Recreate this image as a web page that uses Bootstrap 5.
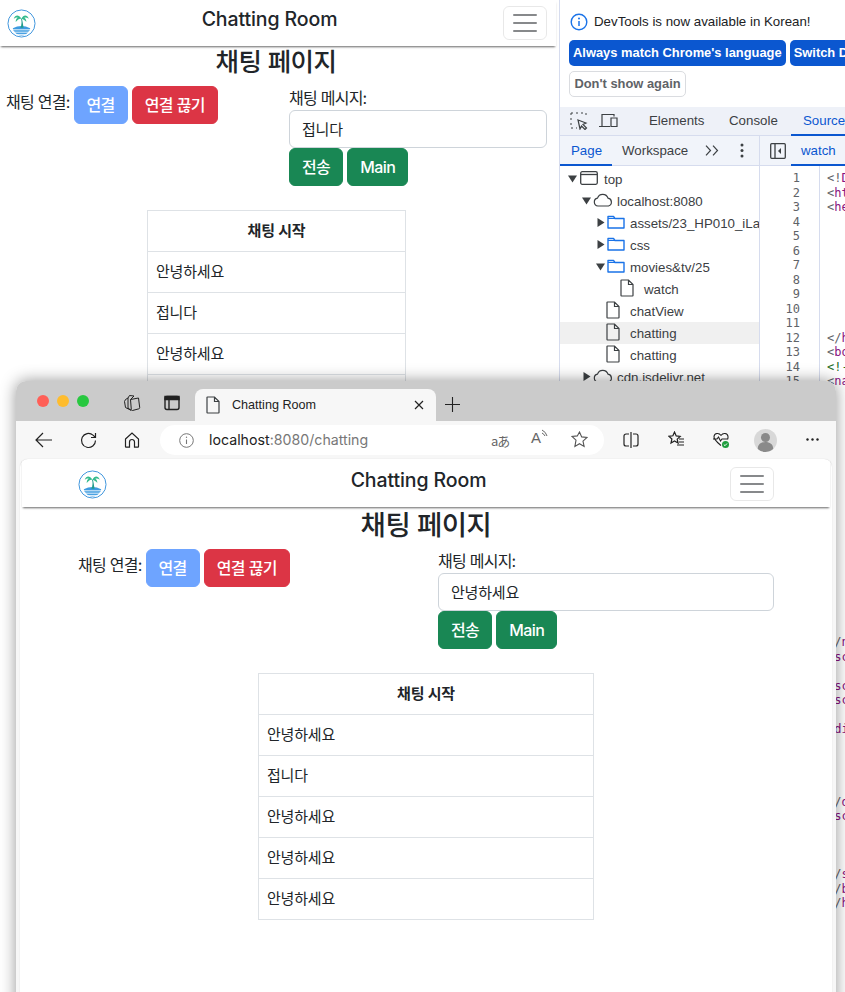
<!DOCTYPE html>
<html lang="ko">
<head>
<meta charset="utf-8">
<title>Chatting Room</title>
<link href="https://cdn.jsdelivr.net/npm/bootstrap@5.3.0/dist/css/bootstrap.min.css" rel="stylesheet">
<style>
html,body{height:992px;overflow:hidden}
body{position:relative;background:#fff;font-family:Inter,"Noto Sans CJK KR",sans-serif;color:#212529;width:845px}
.kr{letter-spacing:-.75px}
.desk-win{position:absolute;overflow:hidden;background:#fff}
.win-app{left:0;top:0;width:559px;height:381px}
.win-dev{left:559px;top:0;width:286px;height:992px;border-left:1px solid #d6dcee;font-family:"Liberation Sans",sans-serif;font-size:13.3px;color:#3c4043}
.win-edge{left:16px;top:381px;width:820px;height:640px;border-radius:10px 10px 0 0;box-shadow:0 0 16px rgba(0,0,0,.42);background:#f7f7f7}
.bar-nav{padding:6px 0;background:#fff;box-shadow:0 2px 2px -1px rgba(0,0,0,.6);height:46px;width:556px;position:relative;flex-wrap:nowrap}
.bar-big{padding:8px 0 6px;height:48px;margin:0 2px;width:auto;background:transparent}
.bar-title{font-size:19.5px;font-weight:500;line-height:24px;padding-bottom:8px;letter-spacing:-.1px}
.bar-nav .navbar-toggler{padding:1px 6px;font-size:20px;border-radius:6px;line-height:1;width:44px;height:34px;display:flex;align-items:center;justify-content:center;border-color:rgba(0,0,0,.09)}
.bar-nav .navbar-toggler-icon{opacity:.72}
.app-logo{width:29px;height:29px;display:block}
.head-ttl{font-size:27.5px;font-weight:500;line-height:33.6px;margin:2px 0 6px;text-align:center;letter-spacing:-.5px}
.app-sm .bar-pad{padding:0 9px 0 7px}
.app-sm .head-ttl{margin:-1px 7px 7px 0;font-size:25.5px}
.conn-lbl{padding-top:4px}
.msg-col{width:258px;margin-right:12px}
.conn-col{padding-left:6px}
.chat-tbl{width:259px;margin:24px 0 0 147px}
.chat-tbl th,.chat-tbl2 th{text-align:center;font-weight:700;letter-spacing:-.2px}
.chat-tbl td,.chat-tbl th,.chat-tbl2 td,.chat-tbl2 th{padding:8px;line-height:24px;font-size:15px}
.chat-tbl td,.chat-tbl2 td{letter-spacing:-.2px}
.btn{font-family:Inter,"Noto Sans CJK KR",sans-serif;font-weight:500;letter-spacing:-.6px}
.btn-on{background:#6ea4ff;border-color:#6ea4ff;color:#fff}
.form-control{color:#212529;font-size:15px;height:38px;padding-left:12px;border-color:#ced4da}
.form-control.kr{letter-spacing:-.2px}
.info-strip{height:107px;padding:12px 9px 0;background:#fff}
.info-line{height:19px;display:flex;align-items:center;gap:6px;margin-left:1px;color:#202124;white-space:nowrap}
.dt-btn{height:26px;border-radius:5px;font-size:12.9px;font-weight:700;padding:0 4px;display:flex;align-items:center;white-space:nowrap;flex:none}
.dt-fill{background:#0b57d0;color:#fff}
.dt-plain{border:1px solid #dadce0;color:#5f6368;width:117px;justify-content:center;margin-top:5px}
.dt-acts{margin-top:9px;gap:4px}
.tab-bar{height:29px;background:#eef1f8;border-bottom:1px solid #d6dcee;white-space:nowrap;position:relative}
.tab-bar .dt-t{position:absolute;top:4px;color:#3c4043}
.sub-bar{height:30px;background:#f1f4fa;border-bottom:1px solid #d6dcee;position:relative;white-space:nowrap}
.sub-bar .dt-t{position:absolute;top:5px}
.dt-on{color:#0b57d0!important}
.u-line{position:absolute;height:2px;background:#0b57d0;bottom:-1px}
.ic-abs{position:absolute;display:block}
.i-inspect{left:10px;top:5px}.i-device{left:39px;top:5px}
.x-elem{left:89px}.x-cons{left:169px}.x-srcs{left:243px}.x-line{left:231px;right:0}
.x-page{left:11px}.x-pline{left:0;width:52px}.x-work{left:62px}
.i-more{left:145px;top:9px}.i-dots{left:180px;top:7px}.i-panel{left:210px;top:7px}
.x-sep{position:absolute;left:199px;top:0;bottom:0;border-left:1px solid #d6dcee}
.x-watch{left:241px}
.split{display:flex;height:827px}
.tree{width:200px;border-right:1px solid #d6dcee;padding-top:2px;overflow:hidden;flex:none}
.t-row{height:22px;display:flex;align-items:center;white-space:nowrap;overflow:hidden;gap:2px}
.t-row svg{flex:none;margin-top:-2px}
.t-row>span{padding-top:2px}
.t-sel{background:#f0f0f0}
.t-tri{width:9px;display:block}
.m-win{margin:0 4px 0 1px}.m-fold{margin-right:3px}.m-cloud{margin-right:2px}.m-doc{margin-right:8px}
.in0{padding-left:8px}.in1{padding-left:22px}.in2{padding-left:36px}.in3{padding-left:60px}.in4{padding-left:46px}
.gutter{width:60px;border-right:1px solid #d6dcee;flex:none}
pre.code-pane{margin:0;font-family:"DejaVu Sans Mono","Liberation Mono",monospace;font-size:12px;letter-spacing:-.02px;line-height:14.5px;padding-top:5px;overflow:hidden;color:#881280}
pre.nums{text-align:right;padding-right:19px;color:#5f6368;width:59px}
pre.src{padding-left:7px}
.g{color:#5f6368}.c{color:#236e25}
.tabstrip{height:40px;background:#cbcbcb;display:flex;align-items:flex-end;position:relative}
.lights{display:flex;gap:8px;position:absolute;left:21px;top:14px}
.lights i{width:12px;height:12px;border-radius:50%;display:block}
.l-r{background:#ff5f57}.l-y{background:#febc2e}.l-g{background:#28c840}
.brow-tab{margin-left:179px;width:241px;height:32px;background:#f7f7f7;border-radius:8px 8px 0 0;display:flex;align-items:center;font-family:"Liberation Sans",sans-serif;font-size:12.6px;padding:0 12px 0 11px;gap:12px;color:#222}
.i-coll{left:107px;top:13px}.i-tabs{left:147px;top:13px}.i-plus{left:429px;top:16px}
.toolbar{height:38px;background:#f7f7f7;display:flex;align-items:center;position:relative}
.addr{position:absolute;left:144px;width:444px;height:30px;top:4px;border-radius:15px;background:#fff;display:flex;align-items:center;font-family:Inter,sans-serif;font-size:14.2px;padding-left:19px;gap:15px;color:#222}
.addr em{font-style:normal;color:#777}
.i-back{left:19px;top:11px}.i-ref{left:64px;top:11px}.i-home{left:108px;top:11px}
.t-aa{position:absolute;left:475px;top:10px;font:13px "Noto Sans CJK JP",sans-serif;color:#666;letter-spacing:-1px}
.t-ra{position:absolute;left:515px;top:8px;font:15px "Liberation Sans",sans-serif;color:#666}
.i-star{left:555px;top:10px}.i-split{left:607px;top:11px}.i-fav{left:652px;top:10px}.i-heart{left:696px;top:10px}.i-user{left:738px;top:8px}.i-menu{left:790px;top:17px}
.view-pg{margin:0 4px;background:#fff;border-radius:8px 8px 0 0;height:560px;box-shadow:0 0 1px rgba(0,0,0,.2);position:relative}
.chat-tbl2{width:336px;margin:24px 0 0}
</style>
</head>
<body>
<svg width="0" height="0" class="position-absolute">
  <symbol id="logo" viewBox="0 0 30 30">
    <circle cx="15" cy="15" r="14" fill="#fff" stroke="#3b93dc" stroke-width="1"/>
    <path d="M6 20q9-5 18 0l-.6 2q-3.500 5.500-8.400 5.500T6.600 22z" fill="#3d9be0"/>
    <path d="M4.500 21.500h21M6 24h18M9 26.300h12" stroke="#fff" stroke-width=".9"/>
    <path d="M14.500 10q1.500 5-.8 9.500h3.400q-.6-5-1.600-9.500z" fill="#1f9c8c"/>
    <path d="M15 10C12 5.500 8.500 6 7 10c2-1.500 3.500-1.500 4-1-1.500 1-2 2.500-2 4.500C11 10.500 13 10 15 10c2 .5 3.500 1.500 5 3.500 0-2-.6-3.400-2-4.500 1-.5 3-.2 4.500 1-1.500-4-5.500-4.500-7.500 0z" fill="#35bb8e"/>
  </symbol>
  <symbol id="folder" viewBox="0 0 18 16"><path d="M1 14V2.500h5.500L8 4.500h9V14z" fill="none" stroke="#1a73e8" stroke-width="1.400" stroke-linejoin="round"/><path d="M1 4.500h7" stroke="#1a73e8"/></symbol>
  <symbol id="doc" viewBox="0 0 14 18"><path d="M1.500 1h7L13 5.500V16.500a.5.5 0 0 1-.5.5h-11a.5.5 0 0 1-.5-.5V1.500A.5.5 0 0 1 1.500 1zM8.500 1v4.500H13" fill="none" stroke="#3c4043" stroke-width="1.200"/></symbol>
  <symbol id="cloud" viewBox="0 0 20 14"><path d="M5 13a4 4 0 0 1-.5-7.900A5.500 5.500 0 0 1 15 5.200 4 4 0 0 1 15.500 13z" fill="none" stroke="#3c4043" stroke-width="1.200"/></symbol>
  <symbol id="tridn" viewBox="0 0 9 9"><path d="M0 1.500h9L4.500 8.500z" fill="#3c4043"/></symbol>
  <symbol id="trirt" viewBox="0 0 9 9"><path d="M1.500 0v9l7-4.500z" fill="#3c4043"/></symbol>
</svg>

<section class="desk-win win-app app-sm">
  <nav class="navbar bar-nav">
    <div class="d-flex justify-content-between align-items-center w-100 bar-pad">
      <a href="#"><svg class="app-logo"><use href="#logo"/></svg></a>
      <span class="bar-title">Chatting Room</span>
      <button class="navbar-toggler" type="button" aria-label="menu"><span class="navbar-toggler-icon"></span></button>
    </div>
  </nav>
  <h1 class="head-ttl kr">채팅 페이지</h1>
  <div class="d-flex justify-content-between">
    <div class="d-flex align-items-start gap-1 conn-col">
      <span class="conn-lbl kr">채팅 연결:</span>
      <button class="btn btn-on" type="button">연결</button>
      <button class="btn btn-danger" type="button">연결 끊기</button>
    </div>
    <div class="msg-col">
      <label class="form-label mb-0 d-block kr">채팅 메시지:</label>
      <input class="form-control kr" value="접니다">
      <div class="d-flex gap-1"><button class="btn btn-success" type="button">전송</button><button class="btn btn-success" type="button">Main</button></div>
    </div>
  </div>
  <table class="table table-bordered chat-tbl kr">
    <thead><tr><th>채팅 시작</th></tr></thead>
    <tbody><tr><td>안녕하세요</td></tr><tr><td>접니다</td></tr><tr><td>안녕하세요</td></tr><tr><td>안녕하세요</td></tr></tbody>
  </table>
</section>

<aside class="desk-win win-dev">
  <div class="info-strip">
    <div class="info-line">
      <svg width="18" height="18" viewBox="0 0 18 18"><circle cx="9" cy="9" r="7.800" fill="none" stroke="#1a73e8" stroke-width="1.400"/><path d="M9 8v5" stroke="#1a73e8" stroke-width="1.500"/><circle cx="9" cy="5.500" r="1" fill="#1a73e8"/></svg>
      <span>DevTools is now available in Korean!</span>
    </div>
    <div class="d-flex dt-acts"><span class="dt-btn dt-fill">Always match Chrome's language</span><span class="dt-btn dt-fill">Switch DevTools to Korean</span></div>
    <span class="dt-btn dt-plain">Don't show again</span>
  </div>
  <div class="tab-bar">
    <svg class="ic-abs i-inspect" width="18" height="18" viewBox="0 0 18 18"><path d="M1 3V1h2M6 1h2M11 1h2M16 1v2M1 6v2M1 11v2M1 16h2M6 16h1" stroke="#3c4043" fill="none"/><path d="M8 8l8 3-3 1.500 3.500 3.500-1.500 1.500-3.500-3.500L10 17z" fill="none" stroke="#3c4043" stroke-width="1.200"/></svg>
    <svg class="ic-abs i-device" width="19" height="18" viewBox="0 0 19 18"><path d="M0 14.500h11M3 14V2.500h12v2M12 6h6v8.500h-6z" stroke="#3c4043" fill="none" stroke-width="1.200"/></svg>
    <span class="dt-t x-elem">Elements</span>
    <span class="dt-t x-cons">Console</span>
    <span class="dt-t dt-on x-srcs">Sources</span>
    <span class="u-line x-line"></span>
  </div>
  <div class="sub-bar">
    <span class="dt-t dt-on x-page">Page</span><span class="u-line x-pline"></span>
    <span class="dt-t x-work">Workspace</span>
    <svg class="ic-abs i-more" width="14" height="11" viewBox="0 0 14 11" fill="none" stroke="#3c4043" stroke-width="1.200"><path d="M1 .7l4.500 4.800L1 10.300M8 .7l4.500 4.800L8 10.300"/></svg>
    <svg class="ic-abs i-dots" width="4" height="15" viewBox="0 0 4 15"><circle cx="2" cy="2" r="1.500" fill="#3c4043"/><circle cx="2" cy="7.500" r="1.500" fill="#3c4043"/><circle cx="2" cy="13" r="1.500" fill="#3c4043"/></svg>
    <svg class="ic-abs i-panel" width="16" height="16" viewBox="0 0 16 16"><rect x=".7" y=".7" width="14.600" height="14.600" rx="1" fill="none" stroke="#3c4043" stroke-width="1.300"/><path d="M5 1v14" stroke="#3c4043" stroke-width="1.300"/><path d="M11 5v6L8 8z" fill="#3c4043"/></svg>
    <span class="x-sep"></span>
    <span class="dt-t dt-on x-watch">watch</span><span class="u-line x-line"></span>
  </div>
  <div class="split">
    <div class="tree">
      <div class="t-row in0"><svg class="t-tri" height="9"><use href="#tridn"/></svg><svg width="18" height="14" viewBox="0 0 18 14" class="m-win"><rect x=".7" y=".7" width="16.600" height="12.600" rx="1.500" fill="none" stroke="#3c4043" stroke-width="1.300"/><path d="M1 3.500h16" stroke="#3c4043" stroke-width="1.300"/></svg><span>top</span></div>
      <div class="t-row in1"><svg class="t-tri" height="9"><use href="#tridn"/></svg><svg width="20" height="14" class="m-cloud"><use href="#cloud"/></svg><span>localhost:8080</span></div>
      <div class="t-row in2"><svg class="t-tri" height="9"><use href="#trirt"/></svg><svg width="18" height="16" class="m-fold"><use href="#folder"/></svg><span>assets/23_HP010_iLa</span></div>
      <div class="t-row in2"><svg class="t-tri" height="9"><use href="#trirt"/></svg><svg width="18" height="16" class="m-fold"><use href="#folder"/></svg><span>css</span></div>
      <div class="t-row in2"><svg class="t-tri" height="9"><use href="#tridn"/></svg><svg width="18" height="16" class="m-fold"><use href="#folder"/></svg><span>movies&amp;tv/25</span></div>
      <div class="t-row in3"><svg width="14" height="18" class="m-doc"><use href="#doc"/></svg><span>watch</span></div>
      <div class="t-row in4"><svg width="14" height="18" class="m-doc"><use href="#doc"/></svg><span>chatView</span></div>
      <div class="t-row in4 t-sel"><svg width="14" height="18" class="m-doc"><use href="#doc"/></svg><span>chatting</span></div>
      <div class="t-row in4"><svg width="14" height="18" class="m-doc"><use href="#doc"/></svg><span>chatting</span></div>
      <div class="t-row in1"><svg class="t-tri" height="9"><use href="#trirt"/></svg><svg width="20" height="14" class="m-cloud"><use href="#cloud"/></svg><span>cdn.jsdelivr.net</span></div>
    </div>
    <div class="gutter"><pre class="code-pane nums">1
2
3
4
5
6
7
8
9
10
11
12
13
14
15</pre></div>
    <pre class="code-pane src"><span class="g">&lt;!</span>DOCTYPE
<span class="g">&lt;</span>html
<span class="g">&lt;</span>head








<span class="g">&lt;/</span>head
<span class="g">&lt;</span>body
<span class="c">&lt;!-- nav</span>
<span class="g">&lt;</span>nav

















<span class="g">&lt;/</span>nav
<span class="g">&lt;</span>script

<span class="g">&lt;</span>script
<span class="g">&lt;</span>script

<span class="g">&lt;</span>div




<span class="g">&lt;/</span>div
<span class="g">&lt;</span>script



<span class="g">&lt;/</span>script
<span class="g">&lt;/</span>body
<span class="g">&lt;/</span>html</pre>
  </div>
</aside>

<main class="desk-win win-edge">
  <div class="tabstrip">
    <div class="lights"><i class="l-r"></i><i class="l-y"></i><i class="l-g"></i></div>
    <svg class="ic-abs i-coll" width="18" height="18" viewBox="0 0 18 18" fill="none" stroke="#222" stroke-linejoin="round"><path d="M7.500 5.500l8-1.500 1.200 9.500q.1 1-.8 1.300L9.500 16.500q-1 .2-1.200-.8z"/><path d="M7.500 5.500L11 2 6.500 1.500 5 4v10l3 2.200M5 4L2.500 5.500 1.500 7.500l1 6L8 16.300"/></svg>
    <svg class="ic-abs i-tabs" width="18" height="18" viewBox="0 0 18 18" fill="none" stroke="#222" stroke-width="1.400"><rect x="2" y="2.500" width="14" height="13" rx="2"/><path d="M2 5.500h14v-3H2z" fill="#222"/><path d="M6 6v9.500"/></svg>
    <div class="brow-tab">
      <svg width="14" height="18"><use href="#doc"/></svg>
      <span class="flex-grow-1">Chatting Room</span>
      <svg width="10" height="10" viewBox="0 0 10 10"><path d="M1 1l8 8M9 1l-8 8" stroke="#222" stroke-width="1.200"/></svg>
    </div>
    <svg class="ic-abs i-plus" width="15" height="15" viewBox="0 0 15 15"><path d="M7.500 0v15M0 7.500h15" stroke="#222" stroke-width="1.100"/></svg>
  </div>
  <div class="toolbar">
    <svg class="ic-abs i-back" width="17" height="16" viewBox="0 0 17 16" fill="none" stroke="#222" stroke-width="1.200"><path d="M17 8H1M8 1L1 8l7 7"/></svg>
    <svg class="ic-abs i-ref" width="17" height="17" viewBox="0 0 17 17" fill="none" stroke="#222" stroke-width="1.200"><path d="M15.500 8.500a7 7 0 1 1-2.500-5.400l2.500 2.400M15.500 1v4.500H11"/></svg>
    <svg class="ic-abs i-home" width="16" height="16" viewBox="0 0 16 16" fill="none" stroke="#222" stroke-width="1.200"><path d="M1.500 7L8 1l6.500 6v7.500a.7.7 0 0 1-.7.700H10.500V10a2.500 2.500 0 0 0-5 0v5.200H2.200a.7.7 0 0 1-.7-.7z"/></svg>
    <div class="addr">
      <svg width="15" height="15" viewBox="0 0 15 15"><circle cx="7.500" cy="7.500" r="6.800" fill="none" stroke="#777"/><path d="M7.500 6.500V11" stroke="#777" stroke-width="1.100"/><circle cx="7.500" cy="4.300" r=".7" fill="#777"/></svg>
      <span>localhost<em>:8080/chatting</em></span>
    </div>
    <span class="t-aa">aあ</span>
    <span class="t-ra">A<svg width="8" height="12" viewBox="0 0 8 12" fill="none" stroke="#666" class="align-top"><path d="M1 1q4 2 5 6M1 4q2 1 3 3"/></svg></span>
    <svg class="ic-abs i-star" width="17" height="17" viewBox="0 0 17 17" fill="none" stroke="#555" stroke-width="1.100"><path d="M8.500 1l2.200 4.900 5.300.6-4 3.600 1.100 5.300-4.600-2.700-4.600 2.700L5 9.100l-4-3.600 5.300-.6z"/></svg>
    <svg class="ic-abs i-split" width="16" height="16" viewBox="0 0 16 16" fill="none" stroke="#222" stroke-width="1.200"><path d="M6 2H3a2 2 0 0 0-2 2v8a2 2 0 0 0 2 2h3M10 2h3a2 2 0 0 1 2 2v8a2 2 0 0 1-2 2h-3M8 0v16"/></svg>
    <svg class="ic-abs i-fav" width="17" height="17" viewBox="0 0 17 17" fill="none" stroke="#222" stroke-width="1.200"><path d="M6.500 1l1.700 3.900 4 .5-3 2.700.9 4-3.600-2.100L3 12l.9-4-3-2.700 4-.5zM11 8h5M11 11h5M9 14h7"/></svg>
    <svg class="ic-abs i-heart" width="18" height="18" viewBox="0 0 18 18"><path d="M9 4.500c-2-3-6.500-2.500-7 1-.4 3 3.500 6 7 9M9 4.500c2-3 6.500-2.500 7 1 .2 1-.1 2-.5 3M1 8h4l1.500-2 2 4 1.500-2h6" fill="none" stroke="#222" stroke-width="1.100"/><circle cx="13.500" cy="13.500" r="3.500" fill="#1e9e3e"/><path d="M11.800 13.500l1.200 1.200 2-2.200" fill="none" stroke="#fff"/></svg>
    <svg class="ic-abs i-user" width="23" height="23" viewBox="0 0 23 23"><circle cx="11.500" cy="11.500" r="11.500" fill="#d8d8d8"/><circle cx="11.500" cy="8.500" r="4.500" fill="#8a8a8a"/><path d="M3.800 20c0-5 3.500-7 7.700-7s7.700 2 7.700 7a11.500 11.500 0 0 1-15.400 0z" fill="#8a8a8a"/></svg>
    <svg class="ic-abs i-menu" width="13" height="3" viewBox="0 0 13 3"><circle cx="1.500" cy="1.500" r="1.200" fill="#222"/><circle cx="6.500" cy="1.500" r="1.200" fill="#222"/><circle cx="11.500" cy="1.500" r="1.200" fill="#222"/></svg>
  </div>
  <div class="view-pg">
    <nav class="navbar bar-nav bar-big">
      <div class="container d-flex justify-content-between align-items-center flex-nowrap">
        <a href="#"><svg class="app-logo"><use href="#logo"/></svg></a>
        <span class="bar-title">Chatting Room</span>
        <button class="navbar-toggler" type="button" aria-label="menu"><span class="navbar-toggler-icon"></span></button>
      </div>
    </nav>
    <h1 class="head-ttl kr">채팅 페이지</h1>
    <div class="container">
      <div class="row">
        <div class="col-6">
          <div class="d-flex align-items-start gap-1">
            <span class="conn-lbl kr">채팅 연결:</span>
            <button class="btn btn-on" type="button">연결</button>
            <button class="btn btn-danger" type="button">연결 끊기</button>
          </div>
        </div>
        <div class="col-6">
          <label class="form-label mb-0 d-block kr">채팅 메시지:</label>
          <input class="form-control kr" value="안녕하세요">
          <div class="d-flex gap-1"><button class="btn btn-success" type="button">전송</button><button class="btn btn-success" type="button">Main</button></div>
        </div>
      </div>
      <div class="row justify-content-center">
        <div class="col-6">
          <table class="table table-bordered chat-tbl2 kr">
            <thead><tr><th>채팅 시작</th></tr></thead>
            <tbody><tr><td>안녕하세요</td></tr><tr><td>접니다</td></tr><tr><td>안녕하세요</td></tr><tr><td>안녕하세요</td></tr><tr><td>안녕하세요</td></tr></tbody>
          </table>
        </div>
      </div>
    </div>
  </div>
</main>
<script src="https://cdn.jsdelivr.net/npm/bootstrap@5.3.0/dist/js/bootstrap.bundle.min.js"></script>
</body>
</html>
